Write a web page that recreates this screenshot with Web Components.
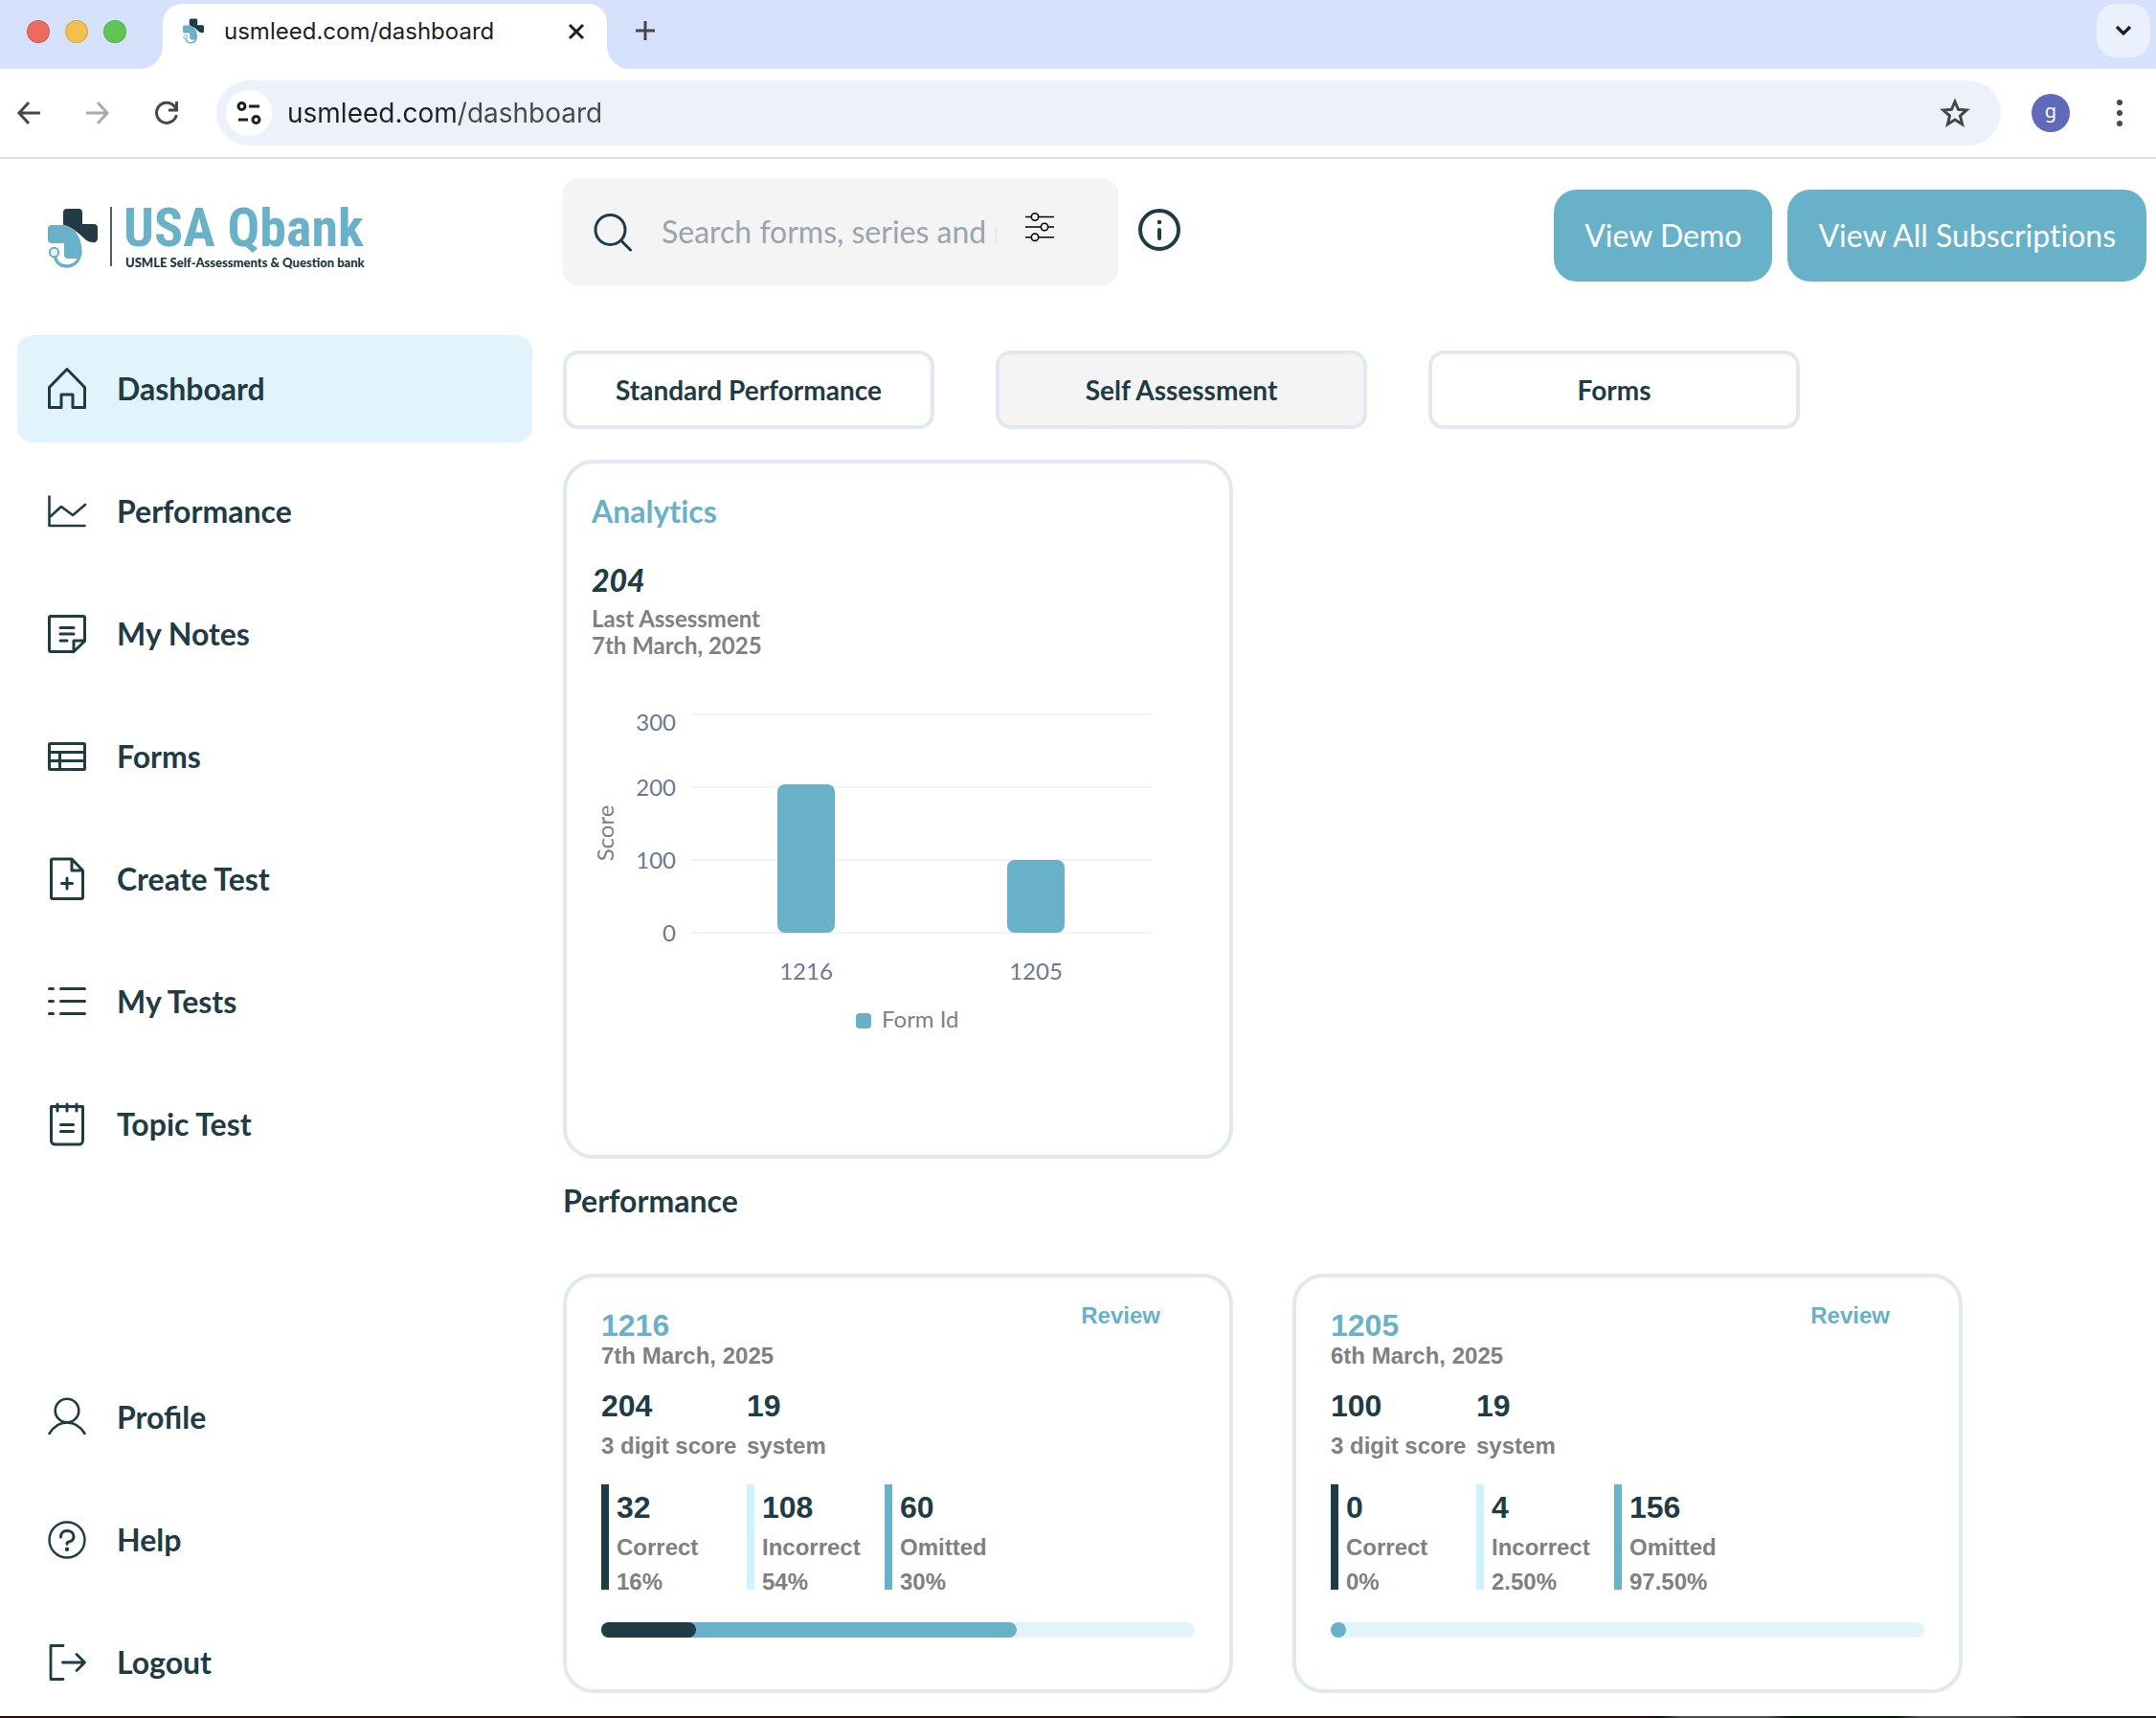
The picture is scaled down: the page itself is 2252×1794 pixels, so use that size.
<!DOCTYPE html>
<html lang="en">
<head>
<meta charset="utf-8">
<meta name="viewport" content="width=device-width, initial-scale=1">
<title>usmleed.com/dashboard</title>
<style>
  :root {
    --ink: #1f3c45;
    --teal: #68b1c8;
    --pale: #e2f4fb;
    --line: #e2e8ef;
    --muted: #808080;
    --soft: #f4f4f4;
  }
  body { margin: 0; background: #fff; color: var(--ink); font-family: Lato, "Open Sans", sans-serif; }
</style>
</head>
<body>
<qb-window>
  <qb-tabstrip slot="chrome"></qb-tabstrip>
  <qb-toolbar slot="chrome"></qb-toolbar>
  <qb-sidebar slot="side">
    <qb-nav-item icon="home" active>Dashboard</qb-nav-item>
    <qb-nav-item icon="chart">Performance</qb-nav-item>
    <qb-nav-item icon="note">My Notes</qb-nav-item>
    <qb-nav-item icon="table">Forms</qb-nav-item>
    <qb-nav-item icon="create">Create Test</qb-nav-item>
    <qb-nav-item icon="list">My Tests</qb-nav-item>
    <qb-nav-item icon="topic">Topic Test</qb-nav-item>
    <qb-nav-item slot="foot" icon="profile">Profile</qb-nav-item>
    <qb-nav-item slot="foot" icon="help">Help</qb-nav-item>
    <qb-nav-item slot="foot" icon="logout">Logout</qb-nav-item>
  </qb-sidebar>
  <qb-header></qb-header>
  <qb-dashboard>
    <qb-result-card form="1216" date="7th March, 2025" score="204" system="19" correct="32" correct-pct="16" incorrect="108" incorrect-pct="54" omitted="60" omitted-pct="30"></qb-result-card>
    <qb-result-card form="1205" date="6th March, 2025" score="100" system="19" correct="0" correct-pct="0" incorrect="4" incorrect-pct="2.50" omitted="156" omitted-pct="97.50"></qb-result-card>
  </qb-dashboard>
</qb-window>

<script>
const BASE = '<style>:host,*{box-sizing:border-box}*{margin:0}button,input{font:inherit;color:inherit;border:0;background:none;padding:0;outline:0}a{color:inherit;text-decoration:none}svg{display:block;overflow:visible}</style>';

const define = (name, render) => customElements.define(name, class extends HTMLElement {
  connectedCallback() {
    if (!this.shadowRoot) this.attachShadow({ mode: 'open' }).innerHTML = BASE + render(this);
  }
});

/* Brand mark: a two-tone cross with a stethoscope */
define('qb-mark', () => `
<style>:host{display:block;flex:none}svg{width:100%;height:100%}</style>
<svg viewBox="0 0 52 62" aria-hidden="true">
  <path fill="#223b45" d="M16 4a4 4 0 0 1 4-4h12a4 4 0 0 1 4 4v12h12a4 4 0 0 1 4 4v11a4 4 0 0 1-5 4q-5 0-9-4Q27 20 16 16.500z"/>
  <path fill="#68b1c8" d="M4 17h14c12 5 18 14 17.500 30q-.5 5-5.500 5h-9a4 4 0 0 1-4-4V36H4a4 4 0 0 1-4-4V21a4 4 0 0 1 4-4z"/>
  <circle cx="6.500" cy="45.500" r="4.700" fill="#e2f4fb" stroke="#68b1c8" stroke-width="2"/>
  <path d="M7.500 50C9 57 14 60 20 60c8 0 13-6 13.800-15" fill="none" stroke="#68b1c8" stroke-width="3.400"/>
</svg>`);

const ICONS = {
  home: '<path d="M1.500 20.500L20 1.500l18.500 19v21H26V28H14v13.500H1.500z"/>',
  chart: '<path d="M1.500 6.500v30.500h37M3 27l11-10 12 9 13-11" stroke-width="2.600"/>',
  note: '<path d="M38.500 29.500V5a1.500 1.500 0 0 0-1.500-1.500H3A1.500 1.500 0 0 0 1.500 5v34A1.500 1.500 0 0 0 3 40.500h24zM38 29H27v11.500M13 15.500h14M13 22h14M13 29h7"/>',
  table: '<rect x="1.500" y="8.500" width="37" height="27" rx="1"/><path d="M2 17.500h36M2 26.500h36M12.500 17.500v18"/>',
  create: '<path d="M25 1H5a1.500 1.500 0 0 0-1.500 1.500v38.500a1.500 1.500 0 0 0 1.500 1.500h30a1.500 1.500 0 0 0 1.500-1.500V13zM25 1v12h11.500M20 21v11M14.500 26.500h11"/>',
  list: '<path d="M1.500 8.500h4M13.500 8.500h25M1.500 21.500h4M13.500 21.500h25M1.500 34.500h4M13.500 34.500h25"/>',
  topic: '<path d="M3.500 3.500h33V39a4 4 0 0 1-4 4h-25a4 4 0 0 1-4-4zM10 1v7M20 1v7M30 1v7M13.500 22.500h13M13.500 29.500h13"/>',
  profile: '<g stroke-width="2.600"><circle cx="20" cy="15" r="12.300"/><path d="M1.500 39C6 31.500 12 27.500 20 27.500S34 31.500 38.500 39"/></g>',
  help: '<g stroke-width="2.400"><circle cx="20" cy="22" r="18.500"/><path stroke-width="3" d="M13.500 19c0-4 2.500-6.500 6.500-6.500s7 2.500 7 6c0 4-3 5-5 5.500-1.500.4-2 1-2 2.300"/></g><circle cx="20" cy="31.700" r="2.200" fill="currentColor" stroke="none"/>',
  logout: '<path d="M16 4.500H3v35h13M15.500 22H38M30 13.500l8.500 8.500-8.500 8.500" stroke-width="2.800"/>'
};

define('qb-nav-item', el => `
<style>
  :host{display:block}
  a{display:flex;align-items:center;gap:32px;height:112px;padding:0 32px;border-radius:16px;font-weight:700;font-size:32px;line-height:40px;color:var(--ink)}
  :host([active]) a{background:var(--pale)}
  svg{flex:none}
</style>
<a href="#${el.getAttribute('icon')}">
  <svg width="40" height="44" viewBox="0 0 40 44" fill="none" stroke="currentColor" stroke-width="3" stroke-linecap="round" stroke-linejoin="round" aria-hidden="true">${ICONS[el.getAttribute('icon')]}</svg>
  <span><slot></slot></span>
</a>`);

define('qb-sidebar', () => `
<style>
  :host{display:flex;flex-direction:column;padding-left:18px}
  .brand{display:flex;height:184px;padding:50px 32px 0}
  qb-mark{width:52px;height:62px;margin-top:2px}
  .rule{width:2px;height:62px;margin-left:13px;background:#4b6269}
  .words{margin-left:12px}
  .name{font:700 56px/48px "Liberation Sans Narrow","Roboto Condensed","Liberation Sans",sans-serif;color:var(--teal);margin-top:-2px;white-space:nowrap}
  .sub{font:900 13px/16px Lato,sans-serif;color:#1d343c;padding-left:2px;white-space:nowrap;margin-top:4px}
  nav{display:flex;flex-direction:column;gap:16px;flex:1}
  .foot{display:flex;flex-direction:column;gap:16px;margin-top:auto}
</style>
<div class="brand"><qb-mark></qb-mark><div class="rule"></div>
  <div class="words"><div class="name">USA Qbank</div><div class="sub">USMLE Self-Assessments &amp; Question bank</div></div>
</div>
<nav><slot></slot><div class="foot"><slot name="foot"></slot></div></nav>`);

define('qb-header', () => `
<style>
  :host{display:flex;align-items:center;padding:20px 10px 0 0}
  .search{display:flex;align-items:center;flex:0 1 580px;min-width:0;height:112px;padding:0 67px 0 32px;border-radius:16px;background:var(--soft)}
  .search svg{flex:none}
  input{flex:1;min-width:0;margin:0 30px 0 31px;font-size:32px;line-height:40px}
  input::placeholder{color:#9ca3af;opacity:1}
  .info{margin-left:20px}
  .actions{display:flex;gap:16px;margin-left:auto;padding-top:8px}
  .actions button{height:96px;padding:0 32px;border-radius:24px;background:var(--teal);color:#fff;font-size:32px;line-height:40px;white-space:nowrap;font-variant-ligatures:none}
</style>
<div class="search" role="search">
  <svg width="40" height="40" viewBox="0 0 40 40" fill="none" stroke="#1f3c45" stroke-width="3" stroke-linecap="round" aria-hidden="true"><circle cx="17.500" cy="18" r="15.500"/><path d="M28.500 29l10 10"/></svg>
  <input type="text" aria-label="Search" placeholder="Search forms, series and more">
  <button type="button" aria-label="Filters"><svg width="30" height="40" viewBox="0 0 30 40" fill="none" stroke="#000" stroke-width="1.600"><path d="M0 4.500h6M14 4.500h16M0 15h16M24 15h6M0 25.700h6M14 25.700h16"/><circle cx="10" cy="4.500" r="3.700"/><circle cx="20" cy="15" r="3.700"/><circle cx="10" cy="25.700" r="3.700"/></svg></button>
</div>
<button class="info" type="button" aria-label="Information"><svg width="46" height="48" viewBox="0 0 46 48" fill="none" stroke="#1f3c45" stroke-width="4" stroke-linecap="round"><circle cx="23" cy="22" r="20"/><path d="M23 22v9"/><circle cx="23" cy="14" r="2.300" fill="#1f3c45" stroke="none"/></svg></button>
<div class="actions"><button type="button">View Demo</button><button type="button">View All Subscriptions</button></div>`);

define('qb-bar-chart', () => {
  const y = v => 274 - v * 76 / 100;
  const bars = [['1216', 204, 226], ['1205', 100, 466]];
  return `
<style>
  :host{display:block}
  text{font-family:Lato,sans-serif;font-size:24px}
  .tick{fill:#6b7890}.name{fill:#808080}
</style>
<svg width="640" height="400" viewBox="2 0 640 400" role="img" aria-label="Score by form id">
  <path d="M106 46h480M106 122h480M106 198h480M106 274h480" stroke="#f1f3f7" stroke-width="2"/>
  <g text-anchor="end">
    <text class="tick" x="90" y="63">300</text><text class="tick" x="90" y="131">200</text>
    <text class="tick" x="90" y="207">100</text><text class="tick" x="90" y="283">0</text>
  </g>
  ${bars.map(([, v, cx]) => `<rect x="${cx - 30}" y="${y(v)}" width="60" height="${274 - y(v)}" rx="8" fill="#68b1c8"/>`).join('')}
  ${bars.map(([n, , cx]) => `<text class="tick" text-anchor="middle" x="${cx}" y="323">${n}</text>`).join('')}
  <text class="name" text-anchor="middle" transform="translate(25 170) rotate(-90)">Score</text>
  <rect x="278" y="358" width="16" height="16" rx="4" fill="#68b1c8"/>
  <text class="name" x="305" y="373">Form Id</text>
</svg>`;
});

define('qb-dashboard', () => `
<style>
  :host{display:block;padding:68px 10px 24px 0}
  .tabs{display:flex;gap:64px}
  .tabs button{width:388px;height:82px;border:4px solid var(--line);border-radius:16px;font-weight:700;font-size:28px;line-height:34px}
  .tabs button[aria-selected=true]{background:var(--soft)}
  .analytics{width:700px;max-width:100%;margin-top:32px;padding:30px 26px 106px;border:4px solid var(--line);border-radius:32px}
  h2{font-size:32px;line-height:40px;font-weight:700}
  .analytics h2{color:var(--teal);font-variant-ligatures:none}
  .score{margin-top:32px;font-size:32px;line-height:40px;font-weight:900;font-style:italic}
  .last{margin-top:6px;font-size:24px;line-height:28px;font-weight:700;color:var(--muted)}
  qb-bar-chart{margin-top:12px}
  .title{margin-top:24px}
  .cards{display:flex;flex-wrap:wrap;gap:62px;margin-top:56px}
</style>
<div class="tabs" role="tablist">
  <button role="tab" aria-selected="false">Standard Performance</button>
  <button role="tab" aria-selected="true">Self Assessment</button>
  <button role="tab" aria-selected="false">Forms</button>
</div>
<section class="analytics">
  <h2>Analytics</h2>
  <p class="score">204</p>
  <div class="last"><p>Last Assessment</p><p>7th March, 2025</p></div>
  <qb-bar-chart></qb-bar-chart>
</section>
<h2 class="title">Performance</h2>
<div class="cards"><slot></slot></div>`);

define('qb-result-card', el => {
  const a = n => el.getAttribute(n);
  const stat = (cls, label) => {
    const k = label.toLowerCase();
    return `<div class="stat ${cls}"><i></i><div><p class="num">${a(k)}</p><p class="lab">${label}</p><p class="pct">${a(k + '-pct')}%</p></div></div>`;
  };
  const c = +a('correct-pct'), t = c + +a('incorrect-pct');
  return `
<style>
  :host{display:block;width:700px;max-width:100%;padding:26px 36px 54px;border:4px solid var(--line);border-radius:32px;font-family:"Liberation Sans",Arial,sans-serif;font-weight:700;font-size:24px;line-height:28px;color:var(--muted)}
  header{display:flex;justify-content:space-between;align-items:flex-start}
  header>div{padding-top:6px}
  h3{font-size:32px;line-height:36px;color:var(--teal)}
  header a{color:var(--teal);margin-right:36px}
  .row{display:grid;grid-template-columns:152px 144px 1fr;white-space:nowrap}
  .totals{margin-top:20px}
  .num{font-size:32px;line-height:36px;color:var(--ink)}
  .lab{margin-top:10px}
  .stats{margin-top:26px;height:116px}
  .stat{display:flex;gap:8px}
  .stat i{width:8px;height:110px;background:var(--mark)}
  .stat .num{margin-top:6px}
  .pct{margin-top:8px}
  .a{--mark:var(--ink)}.b{--mark:#cdf3fd}.c{--mark:var(--teal)}
  .meter{display:grid;height:16px;margin-top:28px;border-radius:8px;background:var(--pale)}
  .meter span{grid-area:1/1;border-radius:8px}
</style>
<header><div><h3>${a('form')}</h3><p>${a('date')}</p></div><a href="#review-${a('form')}">Review</a></header>
<div class="row totals">
  <div><p class="num">${a('score')}</p><p class="lab">3 digit score</p></div>
  <div><p class="num">${a('system')}</p><p class="lab">system</p></div>
</div>
<div class="row stats">${stat('a', 'Correct')}${stat('b', 'Incorrect')}${stat('c', 'Omitted')}</div>
<div class="meter"><span style="width:${t}%;background:var(--teal)"></span><span style="width:${c}%;background:var(--ink)"></span></div>`;
});

define('qb-tabstrip', () => `
<style>
  :host{display:flex;height:72px;background:#d6e1fb;font-family:Inter,"Open Sans",sans-serif;color:#1f1f1f}
  .lights{display:flex;gap:16px;padding:21px 14px 0 28px}
  .lights button{width:24px;height:24px;border-radius:50%;border:1px solid rgba(0,0,0,.12)}
  .flare{align-self:flex-end;flex:none}
  .tab{display:flex;align-items:center;width:464px;height:68px;margin-top:4px;padding:0 24px 11px 21px;border-radius:20px 20px 0 0;background:#fff}
  qb-mark{width:22px;height:27px}
  .tab span{flex:1;margin-left:21px;font-size:24px;line-height:30px}
  .new{margin:22px 0 0 6px;height:20px}
  .more{display:grid;place-items:center;width:56px;height:56px;margin:4px 6px 0 auto;border-radius:20px;background:#ebf1fc}
</style>
<div class="lights"><button aria-label="Close window" style="background:#ec6a5e"></button><button aria-label="Minimise" style="background:#f4bf4f"></button><button aria-label="Zoom" style="background:#61c554"></button></div>
<svg class="flare" width="24" height="24"><path d="M24 0v24H0A24 24 0 0 0 24 0z" fill="#fff"/></svg>
<div class="tab"><qb-mark></qb-mark><span>usmleed.com/dashboard</span>
  <button aria-label="Close tab"><svg width="16" height="16" viewBox="0 0 16 16" stroke="#1f1f1f" stroke-width="3"><path d="M1 1l14 14M15 1L1 15"/></svg></button></div>
<svg class="flare" width="24" height="24"><path d="M0 0v24h24A24 24 0 0 1 0 0z" fill="#fff"/></svg>
<button class="new" aria-label="New tab"><svg width="20" height="20" viewBox="0 0 20 20" stroke="#474747" stroke-width="3"><path d="M10 0v20M0 10h20"/></svg></button>
<button class="more" aria-label="Search tabs"><svg width="18" height="12" viewBox="0 0 18 12" fill="none" stroke="#1f1f1f" stroke-width="3.200"><path d="M2 2l7 7 7-7"/></svg></button>`);

define('qb-toolbar', () => `
<style>
  :host{display:flex;align-items:center;height:94px;padding:0 32px 0 18px;border-bottom:2px solid #e0e0e0;font-family:Inter,"Open Sans",sans-serif}
  .nav{display:flex;gap:48px}
  .pill{display:flex;align-items:center;flex:1;height:68px;margin-left:40px;padding:0 32px 0 10px;border-radius:34px;background:#edf2fa}
  .site{display:grid;place-items:center;width:48px;height:48px;border-radius:50%;background:#fff}
  input{flex:1;min-width:0;margin-left:16px;font-size:28px;line-height:36px;color:#1f1f1f;background:linear-gradient(90deg,#1f1f1f 176px,#474747 0) text;-webkit-background-clip:text;-webkit-text-fill-color:transparent}
  .avatar{width:40px;height:40px;margin-left:32px;padding-bottom:4px;border-radius:50%;background:#5f6abb;color:#fff;font:20px/36px "Noto Sans",sans-serif}
  .menu{margin-left:46px}
</style>
<div class="nav">
  <button aria-label="Back"><svg width="24" height="24" viewBox="0 0 24 24" fill="none" stroke="#474747" stroke-width="3"><path d="M12 1L2 12l10 11M2 12h22"/></svg></button>
  <button aria-label="Forward"><svg width="24" height="24" viewBox="0 0 24 24" fill="none" stroke="#ababab" stroke-width="3"><path d="M12 1l10 11-10 11M22 12H0"/></svg></button>
  <button aria-label="Reload"><svg width="24" height="24" viewBox="0 0 24 24" fill="none" stroke="#474747" stroke-width="3"><path d="M22.300 14A10.500 10.500 0 1 1 20 5l2.500 3.500M22.500 0v9H14"/></svg></button>
</div>
<div class="pill">
  <button class="site" aria-label="Site information"><svg width="26" height="24" viewBox="0 0 26 24" fill="none" stroke="#1f1f1f" stroke-width="3"><circle cx="5.500" cy="5" r="3.500"/><path d="M13 5h11M2 19h10"/><circle cx="20.500" cy="19" r="3.500"/></svg></button>
  <input type="text" aria-label="Address" value="usmleed.com/dashboard" spellcheck="false">
  <button aria-label="Bookmark"><svg width="32" height="32" viewBox="0 0 32 32" fill="none" stroke="#474747" stroke-width="3"><path d="M16 4l3.500 8.300 8.700.7-6.700 5.900 2.100 8.800L16 23l-7.600 4.700 2.100-8.800L3.800 13l8.700-.7z"/></svg></button>
</div>
<button class="avatar" aria-label="Profile g">g</button>
<button class="menu" aria-label="Menu"><svg width="12" height="28" viewBox="0 0 12 28" fill="#474747"><circle cx="6" cy="3" r="3"/><circle cx="6" cy="14" r="3"/><circle cx="6" cy="25" r="3"/></svg></button>`);

define('qb-window', () => `
<style>
  :host{display:flex;flex-direction:column;min-height:100vh;background:#fff}
  .page{display:flex;gap:32px;flex:1}
  .side{display:flex;flex:0 0 556px}
  .side ::slotted(*){flex:1}
  main{flex:1;min-width:0}
  .edge{height:2px;background:linear-gradient(90deg,#2a0d12 76%,#111 77%,#4a4a4a 78%,#4a4a4a 82%,#0c120c 83%,#0c120c 88%,#4a4a4a 89%,#4a4a4a 93%,#1a1a1a 94%)}
</style>
<slot name="chrome"></slot>
<div class="page"><div class="side"><slot name="side"></slot></div><main><slot></slot></main></div>
<div class="edge"></div>`);
</script>
</body>
</html>
